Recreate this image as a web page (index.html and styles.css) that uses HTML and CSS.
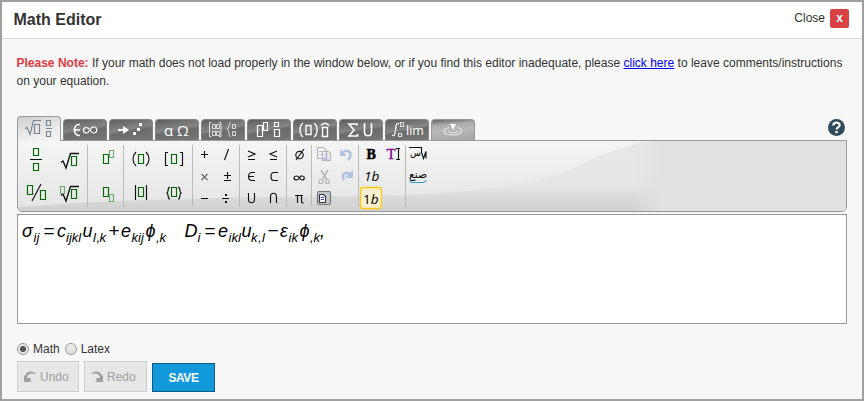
FILE: index.html
```
<!DOCTYPE html>
<html lang="en">
<head>
<meta charset="utf-8">
<title>Math Editor</title>
<link rel="stylesheet" href="styles.css">
</head>
<body>
<svg class="defs" aria-hidden="true">
  <defs>
    <linearGradient id="sheen" x1="0" y1="0" x2="0" y2="1"><stop offset="0" stop-color="#f5f5f5"/><stop offset="1" stop-color="#e5e5e5"/></linearGradient>
    <linearGradient id="base" x1="0" y1="0" x2="0" y2="1"><stop offset="0" stop-color="#e8e8e8"/><stop offset=".64" stop-color="#e6e6e6"/><stop offset=".82" stop-color="#d9d9d9"/><stop offset="1" stop-color="#d0d0d0"/></linearGradient>
    <linearGradient id="fade"><stop offset="0" stop-color="#e1e1e1" stop-opacity="0"/><stop offset="1" stop-color="#e1e1e1"/></linearGradient>
  </defs>
</svg>
<div class="dialog">
  <header class="head">
    <h1>Math Editor</h1>
    <div class="close"><span>Close</span><button class="close-btn">x</button></div>
  </header>
  <main>
    <p class="note"><strong>Please Note:</strong> If your math does not load properly in the window below, or if you find this editor inadequate, please <a href="#">click here</a> to leave comments/instructions on your equation.</p>
    <nav class="tabs">
      <div class="tab active"><svg viewBox="18 117 42 24" class="slate"><path d="M25 128.500l2-1 3 7 3.500-14h7.500"/><path d="M34.500 124.500h5v9h-5zM46.500 120.500h4v5h-4zM46.500 131.500h4v5h-4zM46 128.500h6"/></svg></div>
      <div class="tab"><svg viewBox="64 120 42 20"><path d="M80 124.500h-1c-6 0-6 11 0 11h1M74 130h6" stroke-width="1.700"/><path d="M94 127c-4-1-4 6-7.500 6-4 0-4-5.500 0-5.500 3 0 4 5.500 7 5.500 4.500 0 4-6 .500-6z"/></svg></div>
      <div class="tab"><svg viewBox="110 120 42 20"><path d="M118 130h7" stroke-width="2"/><path class="solid" d="M123 126l6 4-6 4zM133 132h3v3h-3zM137 128h3v3h-3zM139 123h3v3h-3z"/></svg></div>
      <div class="tab"><svg viewBox="156 120 42 20"><text x="164" y="136" font-size="15">α</text><text x="177" y="136" font-size="15">Ω</text></svg></div>
      <div class="tab"><svg viewBox="202 120 42 20"><path stroke="#dedede" stroke-width="1" d="M211.500 122.500h-2v14h2M219 122.500h2v14h-2M212.500 124.500h3v4h-3zM216.500 124.500h3v4h-3zM212.500 131.500h3v4h-3zM216.500 131.500h3v4h-3zM231 122.500c-3 0-1 6-4 7 3 1 1 7 4 7M232.500 124.500h3v4h-3zM232.500 131.500h3v4h-3z"/></svg></div>
      <div class="tab"><svg viewBox="248 120 42 20"><path d="M257.500 125.500h5v11h-5zM263.500 122.500h4v8h-4zM274.500 122.500h4v4h-4zM274.500 129.500h5v7h-5z"/></svg></div>
      <div class="tab"><svg viewBox="294 120 42 20"><path stroke-width="1.400" d="M303 123c-4 3-4 11 0 14M314 123c4 3 4 11 0 14M306 125.500h5v9h-5zM322.500 127.500h5v9h-5zM321 125.500c2-3 6-3 8 0"/></svg></div>
      <div class="tab"><svg viewBox="340 120 42 20"><path stroke-width="1.600" d="M357 125.500V124h-8l5 6-5 6h8.500v-2M364.500 123v9c0 5 7 5 7 0v-9"/></svg></div>
      <div class="tab"><svg viewBox="386 120 42 20"><path d="M399 124c-3-2-3 2-3.500 6s-1 7-3.500 5"/><path stroke="#ddd" d="M400.500 122.500h3v4h-3zM398.500 133.500h3v3h-3z"/><text x="406" y="135" font-size="12.500">lim</text></svg></div>
      <div class="tab light"><svg viewBox="432 120 42 20"><path class="solid" d="M450 124h6l-3 6z"/><path stroke="#e8e8e8" d="M449 127.500c-7 1-7 7.500 4 7.500s11-6.500 4-7.500M449.500 130.500c-3 3 10 3 8 0"/></svg></div>
      <svg class="help" viewBox="0 0 17 17" role="img" aria-label="Help"><circle cx="8.500" cy="8.500" r="8.500" fill="#2f4b59"/><path d="M5.200 6.500c.2-4 6.700-3.800 6.400-.2-.1 2.200-3 2-3 4.200" fill="none" stroke="#fff" stroke-width="2.200"/><path d="M7.300 12h2.400v2.200H7.300z" fill="#fff"/></svg>
    </nav>
    <section class="panel">
      <svg class="gloss" viewBox="18 141 828 70" preserveAspectRatio="none"><path fill="url(#base)" d="M18 141h645v70H18z"/><path fill="url(#sheen)" d="M18 141h640c-25 2-48 10-70 20-16 10-37 17-58 21-44 9-100 13-170 14-130 1-240 3-342 11z"/><path fill="url(#fade)" d="M630 141h31v70h-31z"/><path fill="#e1e1e1" d="M660 141h186v70H660z"/></svg>
      <div class="groups">
        <svg class="group g1" viewBox="18 141 69 70"><path d="M30 159.500h12M32 201l9-17"/><path stroke-width="1.400" d="M61 162.500l2-1.500 3 7 4.500-14.500h8.500M61 195.500l2-1.500 3 7 4.500-14.500h8.500"/><path class="box" d="M33.500 148.500h5v7h-5zM33.500 163.500h5v7h-5zM71.500 156.500h5v9h-5zM27.500 185.500h5v9h-5zM40.500 190.500h5v9h-5zM71.500 189.500h5v9h-5z"/><path class="box soft" d="M60.500 186.500h4v7h-4z"/></svg>
        <svg class="group g2" viewBox="88 141 35 70"><path class="box" d="M103.500 154.500h5v9h-5zM103.500 187.500h5v9h-5z"/><path class="box soft" d="M109.500 150.500h4v7h-4zM109.500 194.500h4v7h-4z"/></svg>
        <svg class="group g3" viewBox="124 141 68 70"><path d="M136 152c-4 4-4 10 0 14M146 152c4 4 4 10 0 14M168 152.500h-2.500v13h2.500M180 152.500h2.500v13H180M135.500 185v15M146.500 185v15M170 187c-3 0-1 5-3 6 2 1 0 6 3 6M178 187c3 0 1 5 3 6-2 1 0 6-3 6"/><path class="box" d="M138.500 154.500h5v9h-5zM171.500 154.500h5v9h-5zM138.500 187.500h5v9h-5zM171.500 187.500h5v9h-5z"/></svg>
        <svg class="group g4" viewBox="193 141 46 70"><path d="M201 154.500h7M204.500 151v7M228.500 149l-4 11M224 175.500h7M227.500 172v7M224 180.500h7M201 198.500h7M222 198.500h7"/><path stroke="#666" d="M201.500 174l6 6M207.500 174l-6 6"/><path class="dot" d="M225 194h2v2h-2zM225 201h2v2h-2z"/></svg>
        <svg class="group g5" viewBox="240 141 46 70"><path d="M248 151l7 3-7 3M248 159.500h7M277 151l-7 3 7 3M270 159.500h7M255 172.500h-3c-4.500 0-4.500 8 0 8h3M248 176.500h6M278 172.500h-4c-4 0-4 8 0 8h4M248.500 193v6c0 5 6 5 6 0v-6M270.500 203v-6c0-5 6-5 6 0v6"/></svg>
        <svg class="group g6" viewBox="287 141 24 70"><circle cx="299.500" cy="155" r="3.700"/><path d="M296 160l8-11M302 176c-2-1-3 4-5 4-4 0-4-4 0-4 2 0 3 4 5 4 3 0 3-4 0-4zM295 195.500h8M297.500 196v7M301.500 196v5q0 2 2 2"/></svg>
        <svg class="group g7" viewBox="312 141 46 70"><g stroke="#b4b4b9"><path fill="#f5f5fb" d="M317.500 147.500h6l3 3v8h-9zM322.500 151.500h6l2 2v7h-8z"/><path stroke="#b5bceb" d="M319 151.500h3M319 154.500h2M324 154.500h4M324 157h5M324 159.500h5"/><path d="M321 170l6 10M328 170l-6 10" stroke-width="1.500"/><circle cx="321" cy="181.500" r="2"/><circle cx="327.500" cy="181.500" r="2"/></g><g stroke="#b0c3e0" stroke-width="2.500"><path d="M342 153c6-5 12 0 6 7"/><path d="M344 180c-3-5 1-9 6-6"/></g><path fill="#b0c3e0" stroke="none" d="M340 149v7h7zM353 170v8h-8z"/><rect x="317.500" y="191.500" width="13" height="13" rx="1.500" fill="#c4c7c9" stroke="#737679"/><path fill="#fff" stroke="#334" d="M319.500 194.500h4l2 2v6h-6z"/><path stroke="#3448c0" stroke-width="1" d="M321 197.500h3M321 199.500h3"/></svg>
        <svg class="group g8" viewBox="359 141 46 70"><rect x="360.500" y="187.500" width="21" height="21" rx="2.500" fill="#f8efcf" stroke="#fc1" stroke-width="1.300"/><text class="serif heavy" x="366.500" y="159" font-size="14">B</text><text class="serif purple" x="386.500" y="159" font-size="15">T</text><path d="M396 148.500h4M396 159.500h4M398.500 149v11"/><text x="364" y="181" font-size="13.500" font-style="italic">1b</text><text x="363" y="203.500" font-size="13.500">1<tspan font-style="italic">b</tspan></text></svg>
        <svg class="group g9" viewBox="406 141 60 70"><path d="M409 147.500h12.500v5l2 6 2.500-7v7"/><text class="arabic" x="410" y="156" font-size="9">س</text><text class="arabic" x="409" y="178" font-size="11" textLength="18" lengthAdjust="spacingAndGlyphs">صنع</text><path stroke="#35a0cf" d="M409.500 180.500l2 2h12l3-2"/></svg>
      </div>
    </section>
    <section class="formula">
      <svg viewBox="18 215 320 36">
        <g font-size="18"><text x="22" y="237">σ</text><text x="57" y="237">c</text><text x="82.500" y="237">u</text><text x="121" y="237">e</text><text x="145.500" y="237">ϕ</text><text x="184.500" y="237">D</text><text x="218" y="237">e</text><text x="241.500" y="237">u</text><text x="280" y="237">ε</text><text x="299.500" y="237">ϕ</text><text x="320" y="237">,</text></g>
        <g class="upright" font-size="19"><text x="43.500" y="237">=</text><text x="108.500" y="237">+</text><text x="204.500" y="237">=</text><text x="267.500" y="237">−</text></g>
        <g font-size="13"><text x="33.500" y="242">ij</text><text x="66" y="242">ijkl</text><text x="93 96.500 99.500" y="242">l,k</text><text x="131.500" y="242">kij</text><text x="156 159.500" y="242">,k</text><text x="197.500" y="242">i</text><text x="228.500" y="242">ikl</text><text x="251 258 262" y="242">k,l</text><text x="288.500" y="242">ik</text><text x="310 313.500" y="242">,k</text></g>
      </svg>
    </section>
    <div class="modes"><label><i class="radio on"></i>Math</label><label><i class="radio"></i>Latex</label></div>
    <div class="actions">
      <button class="btn undo"><svg viewBox="0 0 12 13"><path d="M12 4.500C11 .5 2 0 1.500 5.500H0V12h8c-2-1-2-2.500-1-4H3c0-4 5-6 9-3.500z"/></svg>Undo</button>
      <button class="btn redo"><svg viewBox="0 0 12 13"><path d="M0 4.500C1 .5 10 0 10.500 5.500H12V12H4c2-1 2-2.500 1-4h4c0-4-5-6-9-3.500z"/></svg>Redo</button>
      <button class="btn save">SAVE</button>
    </div>
  </main>
</div>
</body>
</html>
```
FILE: styles.css
```
* { box-sizing: border-box; }
body { margin: 0; font: 12px/18px "Liberation Sans", sans-serif; color: #333; }
svg { display: block; }
.defs { position: absolute; width: 0; height: 0; }
.dialog { width: 864px; height: 401px; border: 2px solid #a0a0a0; background: #f7f7f7; overflow: hidden; }
.head { display: flex; justify-content: space-between; height: 37px; padding: 0 13px 0 11.5px; background: #fff; border-bottom: 1px solid #d8d8d8; }
h1 { margin: 8px 0 0; font-size: 16px; line-height: 19px; }
.close { display: flex; gap: 5px; padding-top: 7px; }
.close-btn { width: 19px; height: 19px; padding: 0 0 1px; border: 0; border-radius: 2px; background: #da4144; color: #fff; font: bold 12px/17px "Liberation Sans", sans-serif; }
main { padding: 15px 15px 0; }
.note { margin: 0 0 0 -0.5px; height: 62px; width: 832px; word-spacing: 0.03px; }
.note strong { color: #df3b40; }
.note a { color: #00e; }

.tabs { display: flex; align-items: flex-end; gap: 2px; height: 24px; }
.tab { width: 44px; height: 21px; border: 1px solid #858585; border-bottom: 0; border-radius: 4px 4px 0 0; background: linear-gradient(170deg, #5e5e5e, #858585 45%, #6b6b6b 55%, #777); }
.tab svg { width: 42px; height: 20px; fill: none; stroke: #fff; stroke-width: 1.2; overflow: visible; }
.tab text { fill: #fff; stroke: none; font-family: "Open Sans", "Noto Sans", sans-serif; }
.tab .solid { fill: #fff; stroke: none; }
.tab.active { height: 25px; margin-bottom: -1px; z-index: 1; border-color: #999; background: linear-gradient(165deg, #cfcfcf, #ebebeb 60%, #f5f5f5); }
.tab.active svg { height: 24px; stroke: #7b8790; }
.tab.light { border-color: #999; background: linear-gradient(175deg, #666, #acacac 25%, #b8b8b8 50%, #a6a6a6); }
.help { width: 17px; height: 17px; margin: 0 2px 4px auto; }

.panel { position: relative; width: 830px; height: 72px; border: 1px solid #999; border-radius: 0 0 5px 5px; overflow: hidden; }
.gloss { position: absolute; inset: 0; width: 828px; height: 70px; }
.groups { position: relative; display: flex; height: 70px; }
.group { height: 70px; fill: none; stroke: #111; stroke-width: 1.15; }
.group + .group { box-sizing: content-box; border-left: 1px solid; border-image: linear-gradient(transparent 5px, #bbb 5px, #bbb 65px, transparent 65px) 1; }
.g1 { width: 69px; }
.g2 { width: 35px; }
.g3 { width: 68px; }
.g4, .g5, .g7, .g8 { width: 46px; }
.g6 { width: 24px; }
.g9 { width: 60px; }
.box { stroke: #006a00; }
.soft { stroke: #72a972; }
.dot { fill: #111; stroke: none; }
.group text { fill: #000; stroke: none; font-family: "Open Sans", sans-serif; }
.group text.serif { font-family: "Liberation Serif", serif; }
.group text.heavy { font-weight: bold; stroke: #000; stroke-width: 0.5; }
.group text.purple { fill: #808; stroke: #808; stroke-width: 0.3; }
.group text.arabic { font-family: "DejaVu Sans", sans-serif; }

.formula { width: 830px; height: 110px; margin-top: 2px; border: 1px solid #999; background: #fff; }
.formula svg { width: 320px; height: 36px; fill: #000; font-family: "Liberation Sans", "DejaVu Sans", sans-serif; font-style: italic; }
.upright { font-style: normal; }

.modes { display: flex; gap: 5px; height: 18px; margin-top: 16px; }
.modes label { display: flex; align-items: center; gap: 4px; }
.radio { width: 12px; height: 12px; border: 1px solid #999; border-radius: 50%; background: linear-gradient(#eee, #ddd); }
.radio.on { background: radial-gradient(circle, #555 0 2.7px, #e6e6e6 3.3px); }
.actions { display: flex; align-items: flex-start; gap: 5px; margin-top: 3px; }
.btn { display: flex; align-items: center; gap: 4px; height: 31px; padding: 0 6px; border: 1px solid #ccc; background: #e7e7e7; color: #a0a0a0; font: 12px "Liberation Sans", sans-serif; }
.btn svg { width: 12px; height: 13px; fill: #a0a0a0; }
.undo { width: 62px; }
.redo { width: 63px; }
.save { width: 63px; height: 29px; margin-top: 2px; justify-content: center; border-color: #0c5b80; background: #1199dc; color: #fff; font-weight: bold; letter-spacing: -0.5px; }
```
